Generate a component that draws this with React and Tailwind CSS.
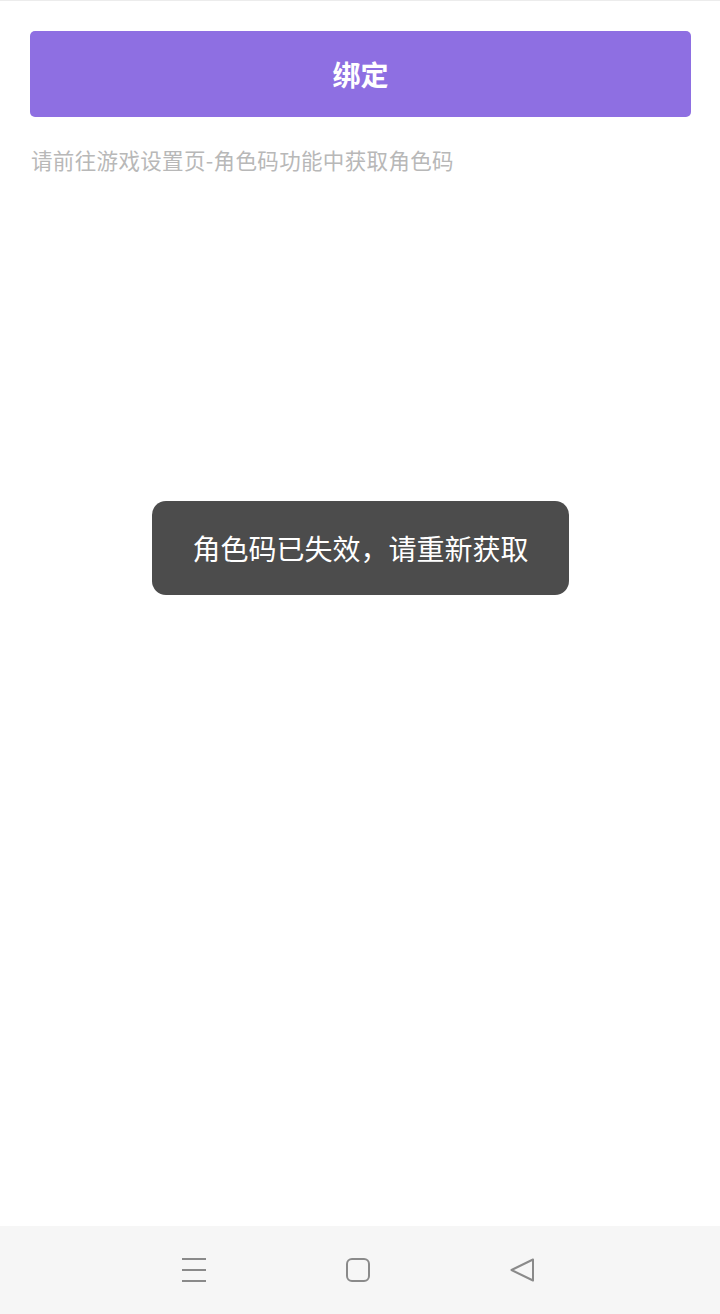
import React from "react";

export default function App() {
  const cjk = { fontFamily: '"Noto Sans CJK SC", "Noto Sans", sans-serif' };
  return (
    <div className="relative w-[720px] h-[1314px] bg-white flex flex-col overflow-hidden" style={cjk}>
      <div className="h-px bg-[#ececec]" />
      <div className="flex-1 px-[30px] pt-[30px]">
        <button className="w-[661px] h-[86px] rounded-[5px] bg-[#8e6fe2] text-white text-[28px] font-bold flex items-center justify-center leading-none">
          绑定
        </button>
        <p className="mt-[28px] ml-px text-[21.5px] leading-[30px] text-[#b8b8b8] tracking-[0.35px]">
          请前往游戏设置页-角色码功能中获取角色码
        </p>
      </div>
      <div className="h-[88px] bg-[#f6f6f6] flex items-center justify-center gap-[140px] pr-[4px]">
        <svg width="24" height="24" viewBox="0 0 24 24" fill="none" stroke="#8a8a8a" strokeWidth="2">
          <line x1="0" y1="1" x2="24" y2="1" />
          <line x1="0" y1="12" x2="24" y2="12" />
          <line x1="0" y1="23" x2="24" y2="23" />
        </svg>
        <svg width="24" height="24" viewBox="0 0 24 24" fill="none" stroke="#8a8a8a" strokeWidth="2">
          <rect x="1" y="1" width="22" height="22" rx="5" />
        </svg>
        <svg width="24" height="24" viewBox="0 0 24 24" fill="none" stroke="#8a8a8a" strokeWidth="2" strokeLinejoin="round">
          <path d="M23 1.5 L1.5 12 L23 22.5 Z" />
        </svg>
      </div>
      <div className="absolute left-[152px] top-[501px] w-[417px] h-[94px] rounded-[14px] bg-[#4c4c4c] flex items-center justify-center">
        <span className="text-white text-[28px] leading-none">角色码已失效，请重新获取</span>
      </div>
    </div>
  );
}
